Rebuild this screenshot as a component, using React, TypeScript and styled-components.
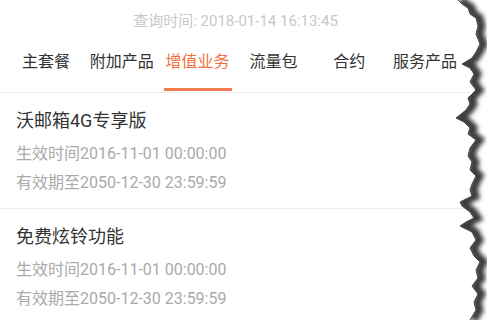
import React from "react";
import styled, { createGlobalStyle } from "styled-components";

const Global = createGlobalStyle`
  html, body { margin: 0; padding: 0; background: #fff; }
  body { font-family: Roboto, "Noto Sans CJK SC", sans-serif; }
`;

const Page = styled.div`
  position: relative;
  width: 487px;
  height: 320px;
  overflow: hidden;
  background: #fff;
`;

const Content = styled.div`
  width: 471px;
  display: flex;
  flex-direction: column;
`;

const QueryTime = styled.div`
  height: 42px;
  line-height: 42px;
  text-align: center;
  font-size: 15px;
  color: #c8c8c8;
`;

const TabBar = styled.div`
  display: flex;
  padding: 0 8px;
  height: 50px;
  border-bottom: 1px solid #ececec;
`;

const Tab = styled.div<{ $active?: boolean }>`
  flex: 1;
  display: flex;
  flex-direction: column;
  align-items: center;
  font-size: 16px;
  color: ${(p) => (p.$active ? "#f2703f" : "#333")};
`;

const TabLabel = styled.span`
  line-height: 40px;
  white-space: nowrap;
`;

const Indicator = styled.div`
  margin-top: auto;
  margin-bottom: 1px;
  width: 68px;
  height: 3px;
  background: #f27a4f;
`;

const Item = styled.div`
  padding: 16px 16px 11px;
  border-bottom: 1px solid #ececec;
`;

const Title = styled.div`
  font-size: 18px;
  line-height: 24px;
  color: #333;
  margin-bottom: 6px;
`;

const Detail = styled.div`
  font-size: 16px;
  line-height: 29px;
  color: #aaa;
`;

const TornEdge = styled.svg`
  position: absolute;
  top: 0;
  left: 440px;
  width: 47px;
  height: 320px;
`;

const tabs = ["主套餐", "附加产品", "增值业务", "流量包", "合约", "服务产品"];

const items = [
  { title: "沃邮箱4G专享版", start: "2016-11-01 00:00:00", end: "2050-12-30 23:59:59" },
  { title: "免费炫铃功能", start: "2016-11-01 00:00:00", end: "2050-12-30 23:59:59" },
];

const edge: [number, number][] = [
  [458, 0], [462, 4], [468, 8], [470, 14], [476, 18], [478, 26], [476, 34], [480, 44],
  [476, 52], [472, 58], [462, 64], [470, 68], [474, 74], [470, 82], [476, 90], [468, 98],
  [470, 104], [466, 110], [456, 118], [464, 122], [470, 128], [468, 134], [476, 140],
  [470, 148], [468, 156], [472, 162], [470, 170], [476, 176], [472, 184], [470, 190],
  [472, 196], [460, 202], [462, 206], [470, 212], [474, 218], [466, 222], [460, 226],
  [472, 232], [476, 240], [470, 248], [474, 256], [480, 262], [476, 270], [478, 278],
  [472, 286], [478, 294], [474, 302], [476, 310], [470, 320],
];

const edgeLine = edge.map(([x, y], i) => `${i ? "L" : "M"}${x} ${y}`).join(" ");
const rightShape = `${edgeLine} L490 320 L490 0 Z`;
const shadowLine = edge.map(([x, y], i) => `${i ? "L" : "M"}${x + 3} ${y}`).join(" ");

export default function App() {
  return (
    <Page>
      <Global />
      <Content>
        <QueryTime>查询时间: 2018-01-14 16:13:45</QueryTime>
        <TabBar>
          {tabs.map((t, i) => (
            <Tab key={t} $active={i === 2}>
              <TabLabel>{t}</TabLabel>
              {i === 2 && <Indicator />}
            </Tab>
          ))}
        </TabBar>
        {items.map((it) => (
          <Item key={it.title}>
            <Title>{it.title}</Title>
            <Detail>生效时间{it.start}</Detail>
            <Detail>有效期至{it.end}</Detail>
          </Item>
        ))}
      </Content>
      <TornEdge viewBox="440 0 47 320" preserveAspectRatio="none">
        <defs>
          <clipPath id="right">
            <path d={rightShape} />
          </clipPath>
          <filter id="blur" x="-50%" y="-10%" width="200%" height="120%">
            <feGaussianBlur stdDeviation="2" />
          </filter>
        </defs>
        <path d={rightShape} fill="#fff" />
        <g clipPath="url(#right)">
          <path d={shadowLine} fill="none" stroke="#3a3a3a" strokeWidth="9" filter="url(#blur)" />
        </g>
        <path d={edgeLine} fill="none" stroke="#444" strokeWidth="1" />
      </TornEdge>
    </Page>
  );
}
